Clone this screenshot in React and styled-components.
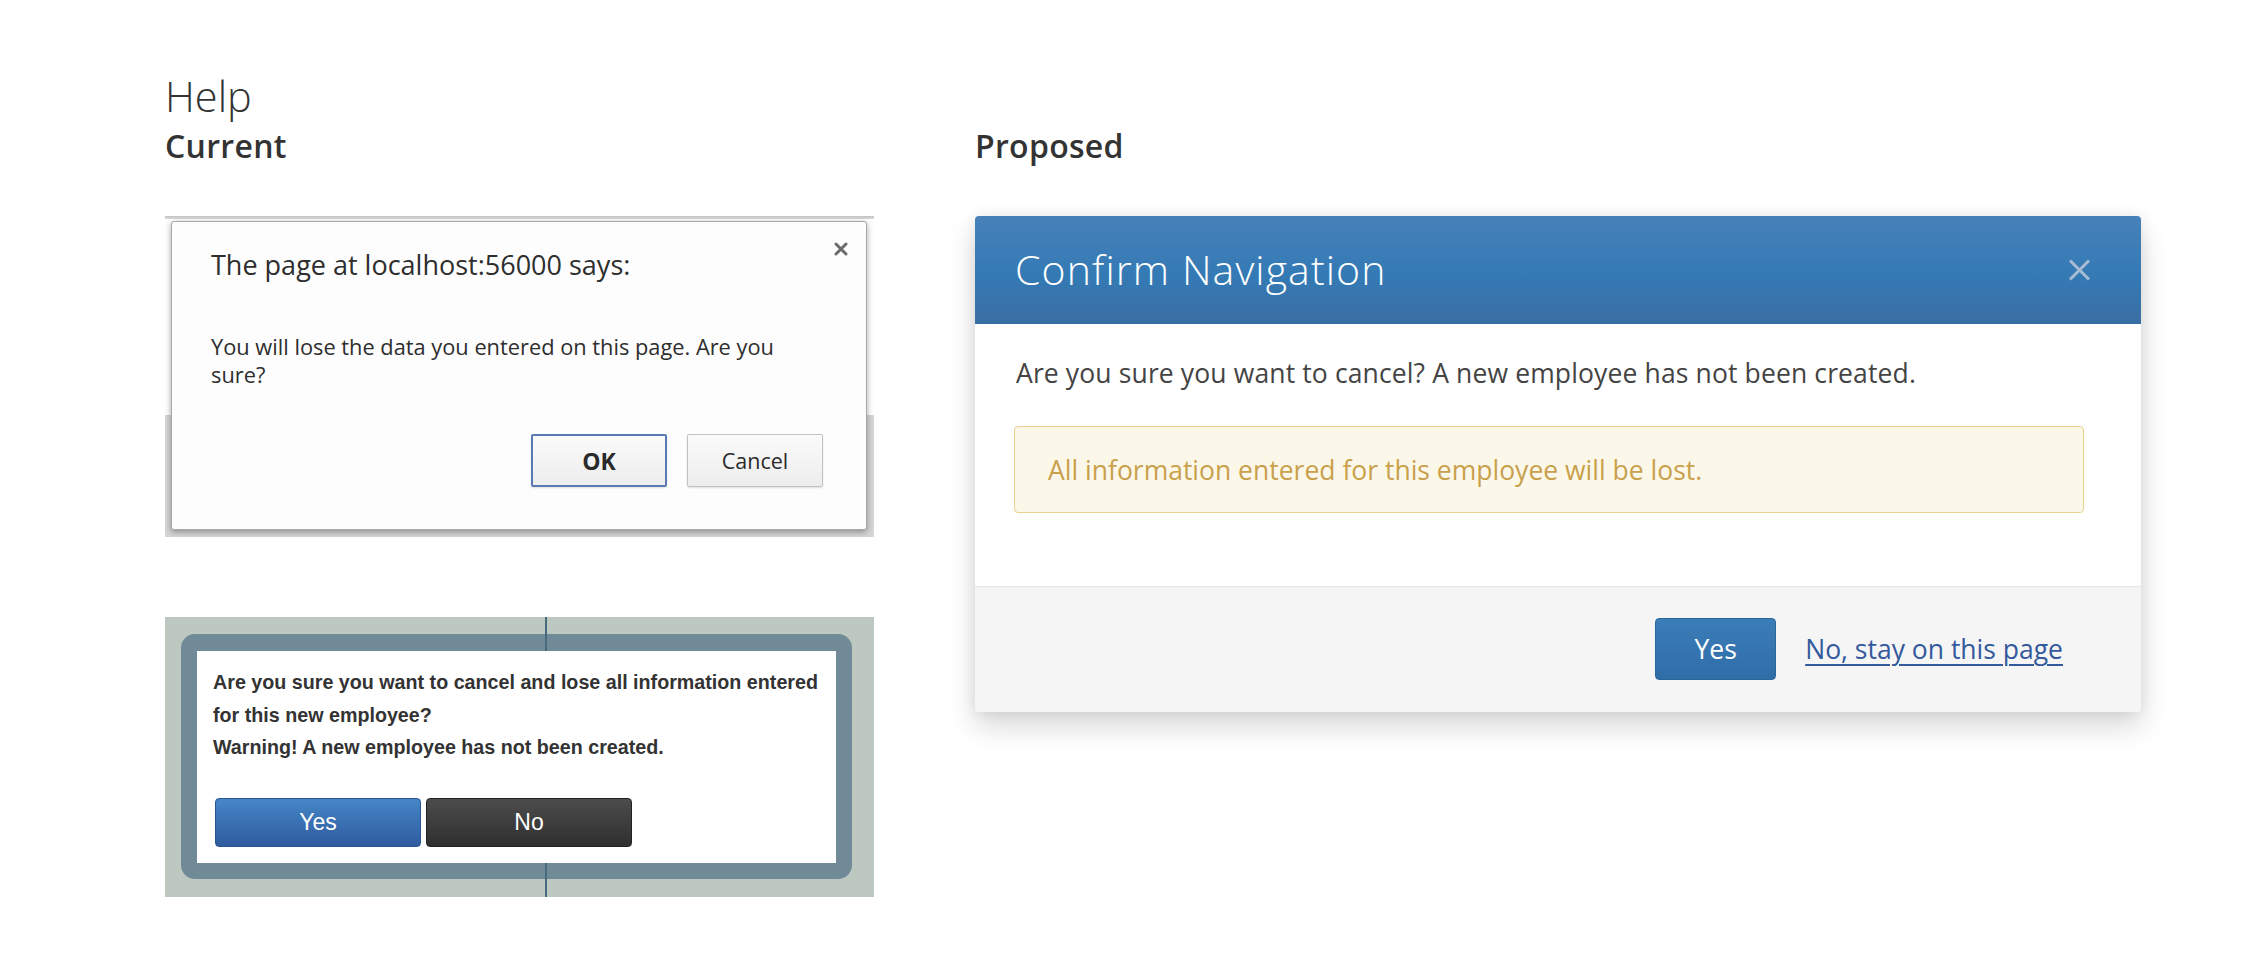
import React from "react";
import styled, { createGlobalStyle } from "styled-components";

const GlobalStyle = createGlobalStyle`
  body {
    margin: 0;
    background: #ffffff;
    font-family: "Open Sans", "Noto Sans", sans-serif;
    color: #333333;
  }
`;

const Page = styled.div`
  width: 2250px;
  box-sizing: border-box;
  padding: 72px 0 60px 165px;
`;

const PageTitle = styled.h1`
  margin: 0;
  font: 300 41.5px/48px "Open Sans", sans-serif;
  color: #333;
`;

const Columns = styled.div`
  display: flex;
  gap: 101px;
  margin-top: 7px;
`;

const Column = styled.div`
  width: ${(p) => p.$width}px;
  display: flex;
  flex-direction: column;
`;

const SubHeading = styled.h2`
  margin: 0 0 51px;
  font: 600 32px/38px "Open Sans", sans-serif;
  letter-spacing: 0.3px;
  color: #333;
`;

/* ---------- current: browser confirm ---------- */

const ChromeShot = styled.div`
  height: 321px;
  box-sizing: border-box;
  padding: 5px 7px 7px 6px;
  background: linear-gradient(
    to bottom,
    #c4c4c4 0,
    #dadada 3px,
    #ffffff 3px,
    #ffffff 199px,
    #d6d6d6 199px,
    #d6d6d6 100%
  );
  margin-bottom: 80px;
`;

const ChromeDialog = styled.div`
  height: 100%;
  box-sizing: border-box;
  display: flex;
  flex-direction: column;
  padding: 28px 43px 42px 39px;
  background: #fdfdfd;
  border: 1px solid #a8a8a8;
  border-radius: 3px;
  box-shadow: 0 2px 6px rgba(0, 0, 0, 0.35);
  font-family: "Open Sans", sans-serif;
  color: #2e2e2e;
`;

const ChromeTitleRow = styled.div`
  display: flex;
  justify-content: space-between;
  align-items: flex-start;
`;

const ChromeTitle = styled.div`
  font-size: 27px;
  line-height: 30px;
`;

const ChromeClose = styled.svg`
  width: 14px;
  height: 14px;
  margin: -8px -25px 0 0;
`;

const ChromeMessage = styled.div`
  margin-top: 53px;
  font-size: 21.8px;
  line-height: 28px;
`;

const ChromeButtons = styled.div`
  margin-top: auto;
  display: flex;
  justify-content: flex-end;
  gap: 20px;
`;

const ChromeButton = styled.button`
  width: 136px;
  height: 53px;
  font-family: "Open Sans", sans-serif;
  font-size: ${(p) => (p.$primary ? 23 : 21.5)}px;
  font-weight: ${(p) => (p.$primary ? 700 : 400)};
  color: #2a2a2a;
  background: linear-gradient(#fafafa, #ededed);
  border: ${(p) => (p.$primary ? "2px solid #5a7ab3" : "1px solid #c2c2c2")};
  border-radius: 2px;
  box-shadow: 0 1px 2px rgba(0, 0, 0, 0.12);
`;

/* ---------- current: legacy modal ---------- */

const LegacyShot = styled.div`
  position: relative;
  height: 280px;
  box-sizing: border-box;
  padding: 17px 22px 18px 16px;
  background: #bcc8c0;
`;

const GridLine = styled.div`
  position: absolute;
  top: 0;
  bottom: 0;
  left: 380px;
  width: 2px;
  background: #476a7e;
  z-index: 1;
`;

const LegacyFrame = styled.div`
  height: 100%;
  box-sizing: border-box;
  padding: 17px 16px 16px;
  border-radius: 14px;
  background: #718a98;
`;

const LegacyPanel = styled.div`
  position: relative;
  z-index: 2;
  height: 100%;
  box-sizing: border-box;
  padding: 15px 16px 16px;
  background: #ffffff;
  display: flex;
  flex-direction: column;
`;

const LegacyText = styled.div`
  font: 700 19.7px/32.5px "Liberation Sans", Arial, sans-serif;
  color: #333;
`;

const LegacyButtons = styled.div`
  margin: auto 0 0 2px;
  display: flex;
  gap: 5px;
`;

const LegacyButton = styled.button`
  width: 206px;
  height: 49px;
  border-radius: 4px;
  font: 400 23px "Liberation Sans", Arial, sans-serif;
  color: #fff;
  border: 1px solid ${(p) => (p.$dark ? "#222" : "#2b5590")};
  background: ${(p) =>
    p.$dark
      ? "linear-gradient(#4c4c4c, #2f2f2f)"
      : "linear-gradient(#4586c7, #2f5b9e)"};
`;

/* ---------- proposed modal ---------- */

const Modal = styled.div`
  border-radius: 4px;
  overflow: hidden;
  background: #fff;
  box-shadow: 0 14px 28px rgba(0, 0, 0, 0.16), 0 0 14px rgba(0, 0, 0, 0.07);
`;

const ModalHeader = styled.div`
  height: 108px;
  box-sizing: border-box;
  display: flex;
  align-items: center;
  justify-content: space-between;
  padding: 0 50px 0 40px;
  background: linear-gradient(#4781b9 0%, #347ab5 55%, #3a6fa3 100%);
  border-bottom: 1px solid #2f6fab;
`;

const ModalTitle = styled.h3`
  margin: 0;
  font: 300 41px/41px "Open Sans", sans-serif;
  color: #fff;
  letter-spacing: 1.1px;
`;

const CloseIcon = styled.svg`
  width: 23px;
  height: 22px;
`;

const ModalBody = styled.div`
  padding: 31px 57px 73px 39px;
`;

const BodyText = styled.p`
  margin: 0 0 35px 2px;
  font-size: 26.5px;
  line-height: 36px;
  color: #444;
  letter-spacing: 0.13px;
`;

const Alert = styled.div`
  height: 87px;
  box-sizing: border-box;
  display: flex;
  align-items: center;
  padding-left: 33px;
  background: #fbf8ea;
  border: 1.5px solid #e8d28e;
  border-radius: 4px;
  font-size: 26.5px;
  color: #c9a04b;
`;

const ModalFooter = styled.div`
  display: flex;
  justify-content: flex-end;
  align-items: center;
  gap: 29px;
  padding: 31px 78px 32px;
  background: #f5f5f5;
  border-top: 1px solid #e6e6e6;
`;

const PrimaryButton = styled.button`
  width: 121px;
  height: 62px;
  border-radius: 4px;
  border: 1px solid #2d6799;
  background: linear-gradient(#3b7db8, #2f6da7);
  color: #fff;
  font: 400 26.5px "Open Sans", sans-serif;
`;

const StayLink = styled.a`
  font-size: 26.5px;
  color: #34599c;
  text-decoration: underline;
  text-underline-offset: 5px;
  text-decoration-thickness: 1.5px;
  cursor: pointer;
`;

export default function App() {
  return (
    <>
      <GlobalStyle />
      <Page>
        <PageTitle>Help</PageTitle>
        <Columns>
          <Column $width={709}>
            <SubHeading>Current</SubHeading>
            <ChromeShot>
              <ChromeDialog>
                <ChromeTitleRow>
                  <ChromeTitle>The page at localhost:56000 says:</ChromeTitle>
                  <ChromeClose viewBox="0 0 14 14">
                    <path
                      d="M2 2 L12 12 M12 2 L2 12"
                      stroke="#6b6b6b"
                      strokeWidth="3"
                      strokeLinecap="round"
                    />
                  </ChromeClose>
                </ChromeTitleRow>
                <ChromeMessage>
                  You will lose the data you entered on this page. Are you
                  <br />
                  sure?
                </ChromeMessage>
                <ChromeButtons>
                  <ChromeButton $primary>OK</ChromeButton>
                  <ChromeButton>Cancel</ChromeButton>
                </ChromeButtons>
              </ChromeDialog>
            </ChromeShot>
            <LegacyShot>
              <GridLine />
              <LegacyFrame>
                <LegacyPanel>
                  <LegacyText>
                    Are you sure you want to cancel and lose all information
                    entered
                    <br />
                    for this new employee?
                    <br />
                    Warning! A new employee has not been created.
                  </LegacyText>
                  <LegacyButtons>
                    <LegacyButton>Yes</LegacyButton>
                    <LegacyButton $dark>No</LegacyButton>
                  </LegacyButtons>
                </LegacyPanel>
              </LegacyFrame>
            </LegacyShot>
          </Column>
          <Column $width={1166}>
            <SubHeading>Proposed</SubHeading>
            <Modal>
              <ModalHeader>
                <ModalTitle>Confirm Navigation</ModalTitle>
                <CloseIcon viewBox="0 0 23 22">
                  <path
                    d="M2 1.5 L21 20.5 M21 1.5 L2 20.5"
                    stroke="#a8bbd4"
                    strokeWidth="3"
                  />
                </CloseIcon>
              </ModalHeader>
              <ModalBody>
                <BodyText>
                  Are you sure you want to cancel? A new employee has not been
                  created.
                </BodyText>
                <Alert>All information entered for this employee will be lost.</Alert>
              </ModalBody>
              <ModalFooter>
                <PrimaryButton>Yes</PrimaryButton>
                <StayLink>No, stay on this page</StayLink>
              </ModalFooter>
            </Modal>
          </Column>
        </Columns>
      </Page>
    </>
  );
}
